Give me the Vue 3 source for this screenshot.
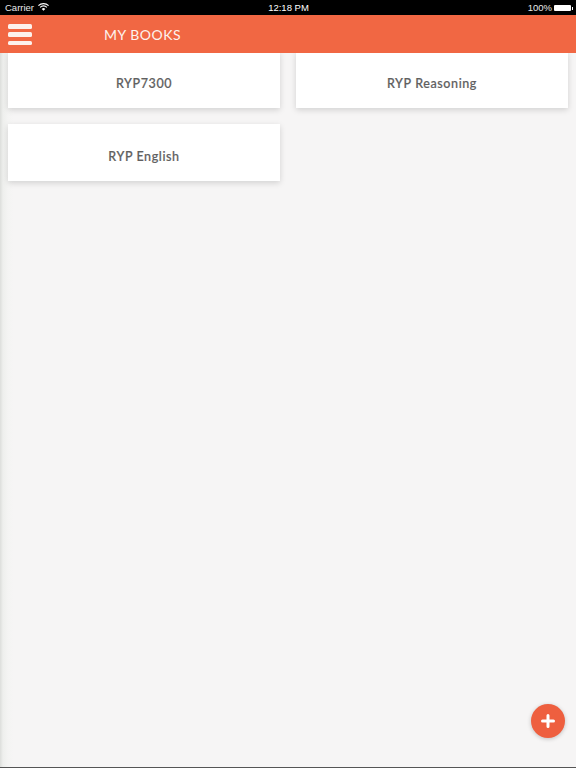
<script setup>
const books = ['RYP7300', 'RYP Reasoning', 'RYP English']
</script>

<template>
  <div class="screen">
    <div class="status">
      <div class="status-left">
        <span>Carrier</span>
        <svg class="wifi" width="11" height="8" viewBox="0 0 11 8">
          <path d="M0.4 2.7A7.2 7.2 0 0 1 10.6 2.7" fill="none" stroke="#fff" stroke-width="1.1" />
          <path d="M2.1 4.3A4.8 4.8 0 0 1 8.9 4.3" fill="none" stroke="#fff" stroke-width="1.1" />
          <path d="M3.7 5.9A2.5 2.5 0 0 1 7.3 5.9L5.5 7.8Z" fill="#fff" />
        </svg>
      </div>
      <span class="clock">12:18 PM</span>
      <div class="status-right">
        <span>100%</span>
        <span class="battery"><i></i></span>
      </div>
    </div>

    <header class="bar">
      <button class="burger" aria-label="Menu"><i></i><i></i><i></i></button>
      <h1>MY BOOKS</h1>
    </header>

    <main class="books">
      <div v-for="b in books" :key="b" class="card">{{ b }}</div>
    </main>

    <button class="fab" aria-label="Add">
      <svg width="16" height="16" viewBox="0 0 16 16">
        <path d="M8 2.5V13.5M2.5 8H13.5" stroke="#fff" stroke-width="3" stroke-linecap="round" />
      </svg>
    </button>
  </div>
</template>

<style>
html, body { margin: 0; padding: 0; }
</style>

<style scoped>
.screen {
  position: relative;
  width: 576px;
  height: 768px;
  overflow: hidden;
  display: flex;
  flex-direction: column;
  box-sizing: border-box;
  background: linear-gradient(90deg, #dcdedb 0, #eeefed 3px, #f4f4f3 8px, #f6f5f5 14px);
  border-bottom: 1px solid #555;
  font-family: Lato, "Liberation Sans", sans-serif;
}
.status {
  height: 15px;
  flex: none;
  background: #000;
  color: #e8e8e8;
  font-family: "Liberation Sans", Arial, sans-serif;
  font-size: 9.5px;
  display: grid;
  grid-template-columns: 1fr auto 1fr;
  align-items: center;
  padding: 0 5px;
}
.status-left { display: flex; align-items: center; gap: 4px; }
.wifi { margin-top: -2px; }
.clock { color: #fff; margin-left: 1px; }
.status-right { display: flex; align-items: center; justify-content: flex-end; gap: 2px; }
.battery {
  display: block;
  width: 17px;
  height: 6px;
  background: #fff;
  border-radius: 1px;
  position: relative;
}
.battery i {
  position: absolute;
  right: -2px;
  top: 2px;
  width: 1px;
  height: 3px;
  background: #fff;
}
.bar {
  position: relative;
  z-index: 2;
  flex: none;
  height: 38px;
  background: #f16743;
  display: flex;
  align-items: center;
  padding-left: 8px;
  box-sizing: border-box;
}
.burger {
  width: 24px;
  height: 21px;
  margin-top: 1px;
  padding: 0;
  border: 0;
  background: none;
  display: flex;
  flex-direction: column;
  justify-content: space-between;
}
.burger i {
  display: block;
  height: 4.5px;
  border-radius: 1.5px;
  background: #fdf1ec;
}
h1 {
  margin: 0 0 0 72px;
  font-size: 14px;
  font-weight: 400;
  letter-spacing: 0.5px;
  color: #fdf3ee;
}
.books {
  margin-top: -2px;
  padding: 0 8px;
  display: grid;
  grid-template-columns: 272px 272px;
  column-gap: 16px;
  row-gap: 16px;
  align-content: start;
}
.card {
  height: 57px;
  box-sizing: border-box;
  padding-top: 7px;
  display: flex;
  align-items: center;
  justify-content: center;
  background: #fff;
  box-shadow: 0 2px 6px rgba(0, 0, 0, 0.15);
  color: #606060;
  font-size: 12.5px;
  font-weight: 500;
  letter-spacing: 0.6px;
  -webkit-text-stroke: 0.2px #606060;
}
.fab {
  position: absolute;
  left: 531px;
  top: 704px;
  width: 34px;
  height: 34px;
  padding: 0;
  border: 0;
  border-radius: 50%;
  background: #ee5f3f;
  box-shadow: 0 1px 4px rgba(0, 0, 0, 0.22);
  display: flex;
  align-items: center;
  justify-content: center;
}
</style>
